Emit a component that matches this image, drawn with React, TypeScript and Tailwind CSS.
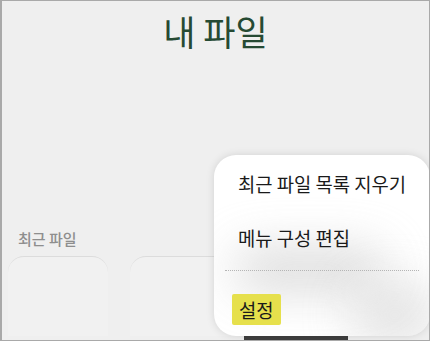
const font = { fontFamily: '"Noto Sans CJK KR", "Noto Sans", sans-serif' };

function RecentCard({ className }: { className: string }) {
  return <div className={`h-[80px] rounded-t-[16px] border-t border-[#dcdcdc] bg-[#f1f1f1] ${className}`} />;
}

export default function App() {
  return (
    <div
      style={font}
      className="relative h-[341px] w-[430px] overflow-hidden border border-l-2 border-[#a9a9a9] bg-[#efefef]"
    >
      <h1 className="pt-[7px] text-center text-[35px] leading-[46px] font-normal text-[#264a33]">내 파일</h1>

      <div className="mt-[175px] pl-[16px] text-[15px] leading-[20px] font-medium text-[#8e8e8e]">최근 파일</div>
      <div className="mt-[7px] flex gap-[22px] pl-[6px]">
        <RecentCard className="w-[100px]" />
        <RecentCard className="w-[160px]" />
      </div>

      {/* bottom bar peeking under the menu */}
      <div className="absolute bottom-0 left-[242px] h-[7px] w-[104px] bg-[#3f3f3f]" />

      {/* overflow menu */}
      <div className="absolute top-[154px] left-[212px] h-[181px] w-[216px] overflow-hidden rounded-[22px] bg-white shadow-[0_0_8px_rgba(0,0,0,0.12)]">
        <div className="absolute top-[95px] left-[20px] h-[40px] w-[150px] rounded-full bg-[#c8c8c8] opacity-70 blur-xl" />
        <div className="absolute top-[130px] right-[-10px] h-[60px] w-[90px] rounded-full bg-[#d0d0d0] opacity-60 blur-xl" />
        <div className="relative flex flex-col whitespace-nowrap">
          <div className="pt-[15px] pl-[24px] text-[18.8px] leading-[27px] text-[#1a1a1a]">최근 파일 목록 지우기</div>
          <div className="pt-[27px] pl-[24px] text-[18.8px] leading-[27px] text-[#1a1a1a]">메뉴 구성 편집</div>
          <div className="mx-[11px] mt-[19px] border-t border-dotted border-[#b5b5b5]" />
          <div className="pt-[23px] pl-[18px]">
            <span className="inline-block rounded-[2px] bg-[#e6e04c] px-[7px] py-[2px] text-[18.8px] leading-[27px] text-[#1a1a1a]">
              설정
            </span>
          </div>
        </div>
      </div>
    </div>
  );
}
